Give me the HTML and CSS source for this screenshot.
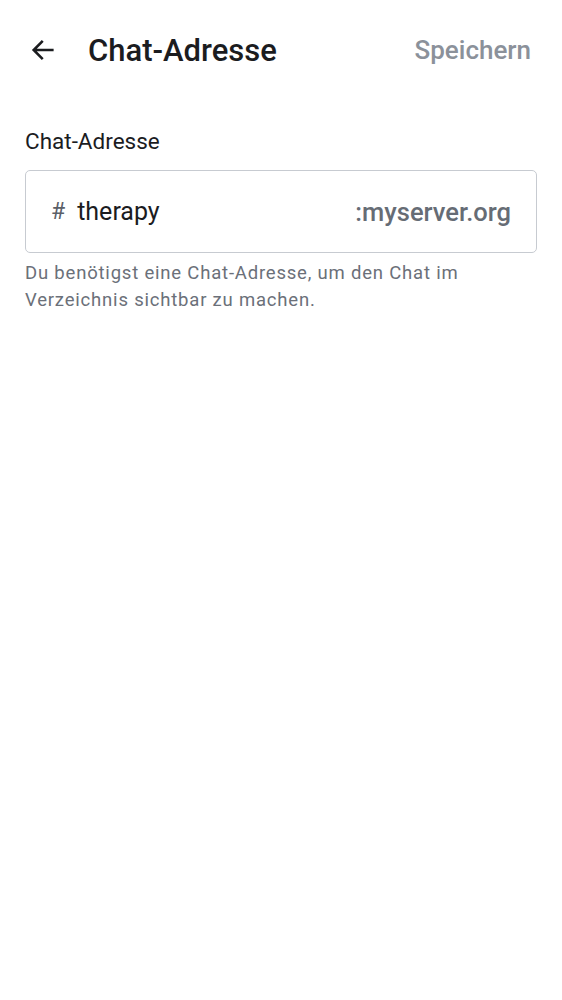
FILE: index.html
```html
<!DOCTYPE html>
<html lang="de">
<head>
<meta charset="utf-8">
<link rel="stylesheet" href="styles.css">
</head>
<body>
<header class="bar">
  <button class="back" aria-label="Zurück">
    <svg width="28" height="28" viewBox="0 0 24 24"><path d="M20 12H5M11 5l-7 7 7 7" fill="none" stroke="#1b1c1f" stroke-width="2.2" stroke-linecap="square" stroke-linejoin="miter"/></svg>
  </button>
  <h1 class="title">Chat-Adresse</h1>
  <span class="save">Speichern</span>
</header>
<main class="content">
  <label class="label">Chat-Adresse</label>
  <div class="field">
    <span class="hash">#</span>
    <span class="value">therapy</span>
    <span class="suffix">:myserver.org</span>
  </div>
  <p class="help">Du benötigst eine Chat-Adresse, um den Chat im Verzeichnis sichtbar zu machen.</p>
</main>
</body>
</html>
```
FILE: styles.css
```css
* { box-sizing: border-box; }
body {
  margin: 0;
  background: #fff;
  font-family: Roboto, "Noto Sans", sans-serif;
  color: #1b1c1f;
}
.bar {
  display: flex;
  align-items: center;
  height: 100px;
  padding: 0 31px 0 28px;
}
.back {
  border: 0;
  background: none;
  padding: 0;
  width: 30px;
  height: 30px;
  display: flex;
  align-items: center;
  justify-content: center;
  margin-right: 30px;
}
.title {
  margin: 0;
  font-size: 31px;
  font-weight: 500;
  flex: 1;
  letter-spacing: 0;
}
.save {
  font-size: 26px;
  font-weight: 500;
  color: #8b919a;
}
.content {
  padding: 26px 25px 0 25px;
}
.label {
  display: block;
  font-size: 22.5px;
  color: #1b1c1f;
  line-height: 30px;
}
.field {
  margin-top: 14px;
  height: 83px;
  border: 1px solid #c7cbd1;
  border-radius: 5px;
  display: flex;
  align-items: center;
  padding: 0 25px 0 25px;
  font-size: 25px;
}
.hash {
  color: #5b6068;
  font-size: 23px;
  margin-right: 12px;
}
.value {
  flex: 1;
  color: #1b1c1f;
}
.suffix {
  color: #666c75;
  font-weight: 500;
  font-size: 25.5px;
}
.help {
  margin: 7px 0 0;
  font-size: 18.5px;
  line-height: 27px;
  color: #6b7079;
  letter-spacing: 0.8px;
}
```
